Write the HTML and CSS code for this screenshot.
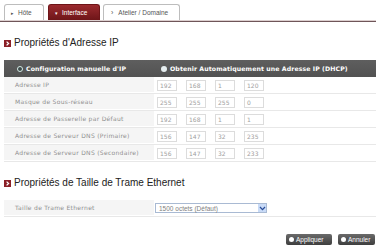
FILE: index.html
```html
<!DOCTYPE html>
<html>
<head>
<meta charset="utf-8">
<link rel="stylesheet" href="styles.css">
</head>
<body>
<div class="tabs">
  <div class="tab t1"><span class="arr">▸</span>Hôte</div>
  <div class="tab t2 active"><span class="arr">▾</span>Interface</div>
  <div class="tab t3"><span class="arr">›</span>Atelier / Domaine</div>
</div>
<div class="content">
  <h2 class="sec"><svg class="sicon" width="7" height="7" viewBox="0 0 7 7"><rect width="7" height="7" fill="#8a1f26"/><path d="M2.6 1.6 L4.6 3.5 L2.6 5.4" stroke="#fff" stroke-width="1.3" fill="none"/></svg>Propriétés d'Adresse IP</h2>
  <div class="tbl">
    <div class="thead">
      <div class="th th1"><span class="radio on"></span>Configuration manuelle d'IP</div>
      <div class="th th2"><span class="radio"></span>Obtenir Automatiquement une Adresse IP (DHCP)</div>
    </div>
    <div class="row"><div class="lbl">Adresse IP</div><div class="val"><span class="ip">192</span><span class="ip">168</span><span class="ip">1</span><span class="ip">120</span></div></div>
    <div class="row"><div class="lbl">Masque de Sous-réseau</div><div class="val"><span class="ip">255</span><span class="ip">255</span><span class="ip">255</span><span class="ip">0</span></div></div>
    <div class="row"><div class="lbl">Adresse de Passerelle par Défaut</div><div class="val"><span class="ip">192</span><span class="ip">168</span><span class="ip">1</span><span class="ip">1</span></div></div>
    <div class="row"><div class="lbl">Adresse de Serveur DNS (Primaire)</div><div class="val"><span class="ip">156</span><span class="ip">147</span><span class="ip">32</span><span class="ip">235</span></div></div>
    <div class="row"><div class="lbl">Adresse de Serveur DNS (Secondaire)</div><div class="val"><span class="ip">156</span><span class="ip">147</span><span class="ip">32</span><span class="ip">233</span></div></div>
  </div>
  <h2 class="sec sec2"><svg class="sicon" width="7" height="7" viewBox="0 0 7 7"><rect width="7" height="7" fill="#8a1f26"/><path d="M2.6 1.6 L4.6 3.5 L2.6 5.4" stroke="#fff" stroke-width="1.3" fill="none"/></svg>Propriétés de Taille de Trame Ethernet</h2>
  <div class="tbl">
    <div class="row"><div class="lbl">Taille de Trame Ethernet</div><div class="val"><div class="select"><span class="seltext">1500 octets (Défaut)</span><span class="selbtn"><svg width="7" height="5" viewBox="0 0 7 5"><path d="M1 1 L3.5 3.6 L6 1" stroke="#2b4f9a" stroke-width="1.3" fill="none"/></svg></span></div></div></div>
  </div>
  <div class="actions">
    <div class="btn"><span class="bico"></span>Appliquer</div>
    <div class="btn"><span class="bico"></span>Annuler</div>
  </div>
</div>
</body>
</html>
```
FILE: styles.css
```css
html, body {
  margin: 0;
  padding: 0;
  background: #fff;
  font-family: "Liberation Sans", Arial, sans-serif;
}
.tabs {
  display: flex;
  align-items: flex-end;
  padding: 4px 0 0 4px;
  border-bottom: 1px solid #dccfcf;
  box-shadow: 0 1px 0 #6f5559;
  height: 16px;
}
.tab {
  box-sizing: border-box;
  height: 16px;
  border: 1px solid #bdbdbd;
  border-bottom: none;
  border-radius: 3px 3px 0 0;
  background: #fff;
  font-size: 6.5px;
  color: #555;
  display: flex;
  align-items: center;
  padding-left: 6px;
  margin-right: 4px;
}
.t1 { width: 40px; }
.t2 { width: 52px; margin-right: 3px; }
.t3 { width: 77px; }
.tab.active {
  background: linear-gradient(#9b2b2f, #6e1518);
  border-color: #6e1518;
  color: #fff;
}
.arr {
  font-size: 5px;
  margin-right: 4px;
}
.t3 .arr { font-size: 7px; margin-left: 1px; margin-right: 5px; }
.content {
  padding-left: 4px;
}
.sec {
  margin: 16px 0 11px 0;
  font-size: 10px;
  line-height: 12px;
  font-weight: normal;
  color: #222;
  display: flex;
  align-items: center;
}
.sec2 { margin-top: 15px; }
.sicon {
  margin-right: 3px;
  flex: none;
}
.tbl {
  font-family: "DejaVu Sans", Verdana, sans-serif;
}
.thead {
  display: flex;
  height: 17px;
  background: linear-gradient(#5e5e5e, #525252);
  color: #fff;
  font-weight: bold;
  font-size: 6.2px;
  letter-spacing: 0.1px;
  align-items: center;
}
.th {
  display: flex;
  align-items: center;
}
.th1 {
  width: 150px;
  padding-left: 13px;
  box-sizing: border-box;
}
.th2 { padding-left: 7px; }
.radio {
  width: 6px;
  height: 6px;
  border-radius: 50%;
  background: #e6eef0;
  margin-right: 3px;
  box-sizing: border-box;
}
.radio.on {
  background: #3d4a4a;
  border: 1.5px solid #d6ece6;
}
.row {
  display: flex;
  height: 16px;
  border-bottom: 1px solid #e8e8e8;
}
.lbl {
  width: 150px;
  box-sizing: border-box;
  background: #f5f5f5;
  border-bottom: 1px solid #fff;
  padding-left: 11px;
  font-size: 6px;
  color: #909090;
  display: flex;
  align-items: center;
  letter-spacing: 0.3px;
}
.val {
  flex: 1;
  display: flex;
  align-items: center;
  gap: 9px;
  padding-left: 3px;
}
.ip {
  box-sizing: border-box;
  width: 20px;
  height: 11px;
  border: 1px solid #dcdcdc;
  font-size: 6px;
  color: #a0a0a0;
  padding-left: 2px;
  display: flex;
  align-items: center;
}
.select {
  box-sizing: border-box;
  margin-left: -2px;
  width: 112px;
  height: 10px;
  border: 1px solid #a9bad3;
  display: flex;
  align-items: center;
  justify-content: space-between;
  font-family: "Liberation Sans", Arial, sans-serif;
  font-size: 6.5px;
  color: #808080;
  padding-left: 3px;
}
.selbtn {
  width: 8px;
  height: 8px;
  background: #c9dbf7;
  display: flex;
  align-items: center;
  justify-content: center;
}
.actions {
  display: flex;
  justify-content: flex-end;
  gap: 6px;
  margin-top: 17px;
  padding-right: 1px;
}
.btn {
  height: 11px;
  box-sizing: border-box;
  border-radius: 2px;
  background: linear-gradient(#6a6a6a, #3e3e3e);
  color: #fff;
  font-size: 6.5px;
  display: flex;
  align-items: center;
  padding: 0 4px 0 3px;
}
.btn:first-child { width: 46px; }
.btn:last-child { width: 37px; }
.bico {
  width: 5px;
  height: 5px;
  border-radius: 50%;
  background: #fff;
  margin-right: 2px;
}
```
